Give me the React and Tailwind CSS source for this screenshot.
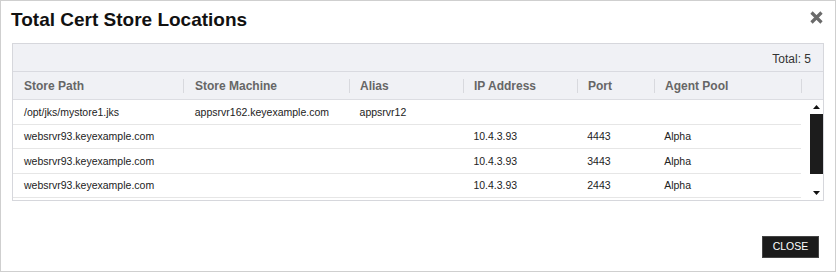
import React from "react";

const columns = [
  { label: "Store Path", width: "w-[171px]", pad: "pl-[11px]" },
  { label: "Store Machine", width: "w-[166px]", pad: "pl-[11px]" },
  { label: "Alias", width: "w-[114px]", pad: "pl-[10px]" },
  { label: "IP Address", width: "w-[114px]", pad: "pl-[10px]" },
  { label: "Port", width: "w-[77px]", pad: "pl-[10px]" },
  { label: "Agent Pool", width: "w-[147px]", pad: "pl-[10px]" },
];

const rows = [
  ["/opt/jks/mystore1.jks", "appsrvr162.keyexample.com", "appsrvr12", "", "", ""],
  ["websrvr93.keyexample.com", "", "", "10.4.3.93", "4443", "Alpha"],
  ["websrvr93.keyexample.com", "", "", "10.4.3.93", "3443", "Alpha"],
  ["websrvr93.keyexample.com", "", "", "10.4.3.93", "2443", "Alpha"],
];

function Scrollbar() {
  return (
    <div className="w-[13px] ml-auto flex flex-col">
      <div className="h-[14px] flex items-center justify-center">
        <svg width="7" height="4" viewBox="0 0 7 4">
          <path d="M0 4 L3.5 0 L7 4 Z" fill="#111" />
        </svg>
      </div>
      <div className="h-[60px] bg-[#1c1c1c]" />
      <div className="flex-1" />
      <div className="h-[14px] flex items-center justify-center pb-[1px]">
        <svg width="7" height="4" viewBox="0 0 7 4">
          <path d="M0 0 L7 0 L3.5 4 Z" fill="#111" />
        </svg>
      </div>
    </div>
  );
}

export default function App() {
  return (
    <div className="w-[836px] h-[272px] bg-white border border-[#cfcfcf] flex flex-col font-['Liberation_Sans',Arial,sans-serif] text-[#222]">
      <div className="flex justify-between pl-[10px] pr-[12px] pt-[8px]">
        <h1 className="text-[19px] leading-[22px] font-bold text-[#111]">
          Total Cert Store Locations
        </h1>
        <button className="mt-[2px] w-[13px] h-[13px]">
          <svg width="13" height="13" viewBox="0 0 13 13">
            <path d="M1.5 1.5 L11.5 11.5 M11.5 1.5 L1.5 11.5" stroke="#6a6a6a" strokeWidth="3.2" />
          </svg>
        </button>
      </div>

      <div className="ml-[11px] mt-[12px] w-[812px] border border-[#d6d7dc]">
        <div className="h-[28px] pt-[2px] bg-[#f0f1f5] border-b border-[#d9dae0] flex items-center justify-end pr-[12px] text-[12px] text-[#333]">
          Total: 5
        </div>
        <div className="h-[28px] bg-[#f0f1f5] border-b border-[#dcdde2] flex items-center text-[12px] font-bold text-[#666]">
          {columns.map((c) => (
            <div key={c.label} className={`${c.width} flex items-center`}>
              <span className={`flex-1 ${c.pad}`}>{c.label}</span>
              <span className="w-px h-[14px] bg-[#d8d9de]" />
            </div>
          ))}
        </div>
        <div className="h-[100px] flex overflow-hidden bg-white">
          <div className="w-[788px] text-[10.5px]">
            {rows.map((r, ri) => (
              <div key={ri} className="h-[24.5px] pt-[2px] border-b border-[#e6e6e6] flex items-center">
                {r.map((cell, ci) => (
                  <div key={ci} className={`${columns[ci].width} ${columns[ci].pad}`}>
                    {cell}
                  </div>
                ))}
              </div>
            ))}
          </div>
          <Scrollbar />
        </div>
      </div>

      <div className="mt-auto flex justify-end pr-[16px] pb-[13px]">
        <button className="w-[57px] h-[22px] bg-[#1b1b1b] border border-[#444] text-[10.5px] text-white">
          CLOSE
        </button>
      </div>
    </div>
  );
}
